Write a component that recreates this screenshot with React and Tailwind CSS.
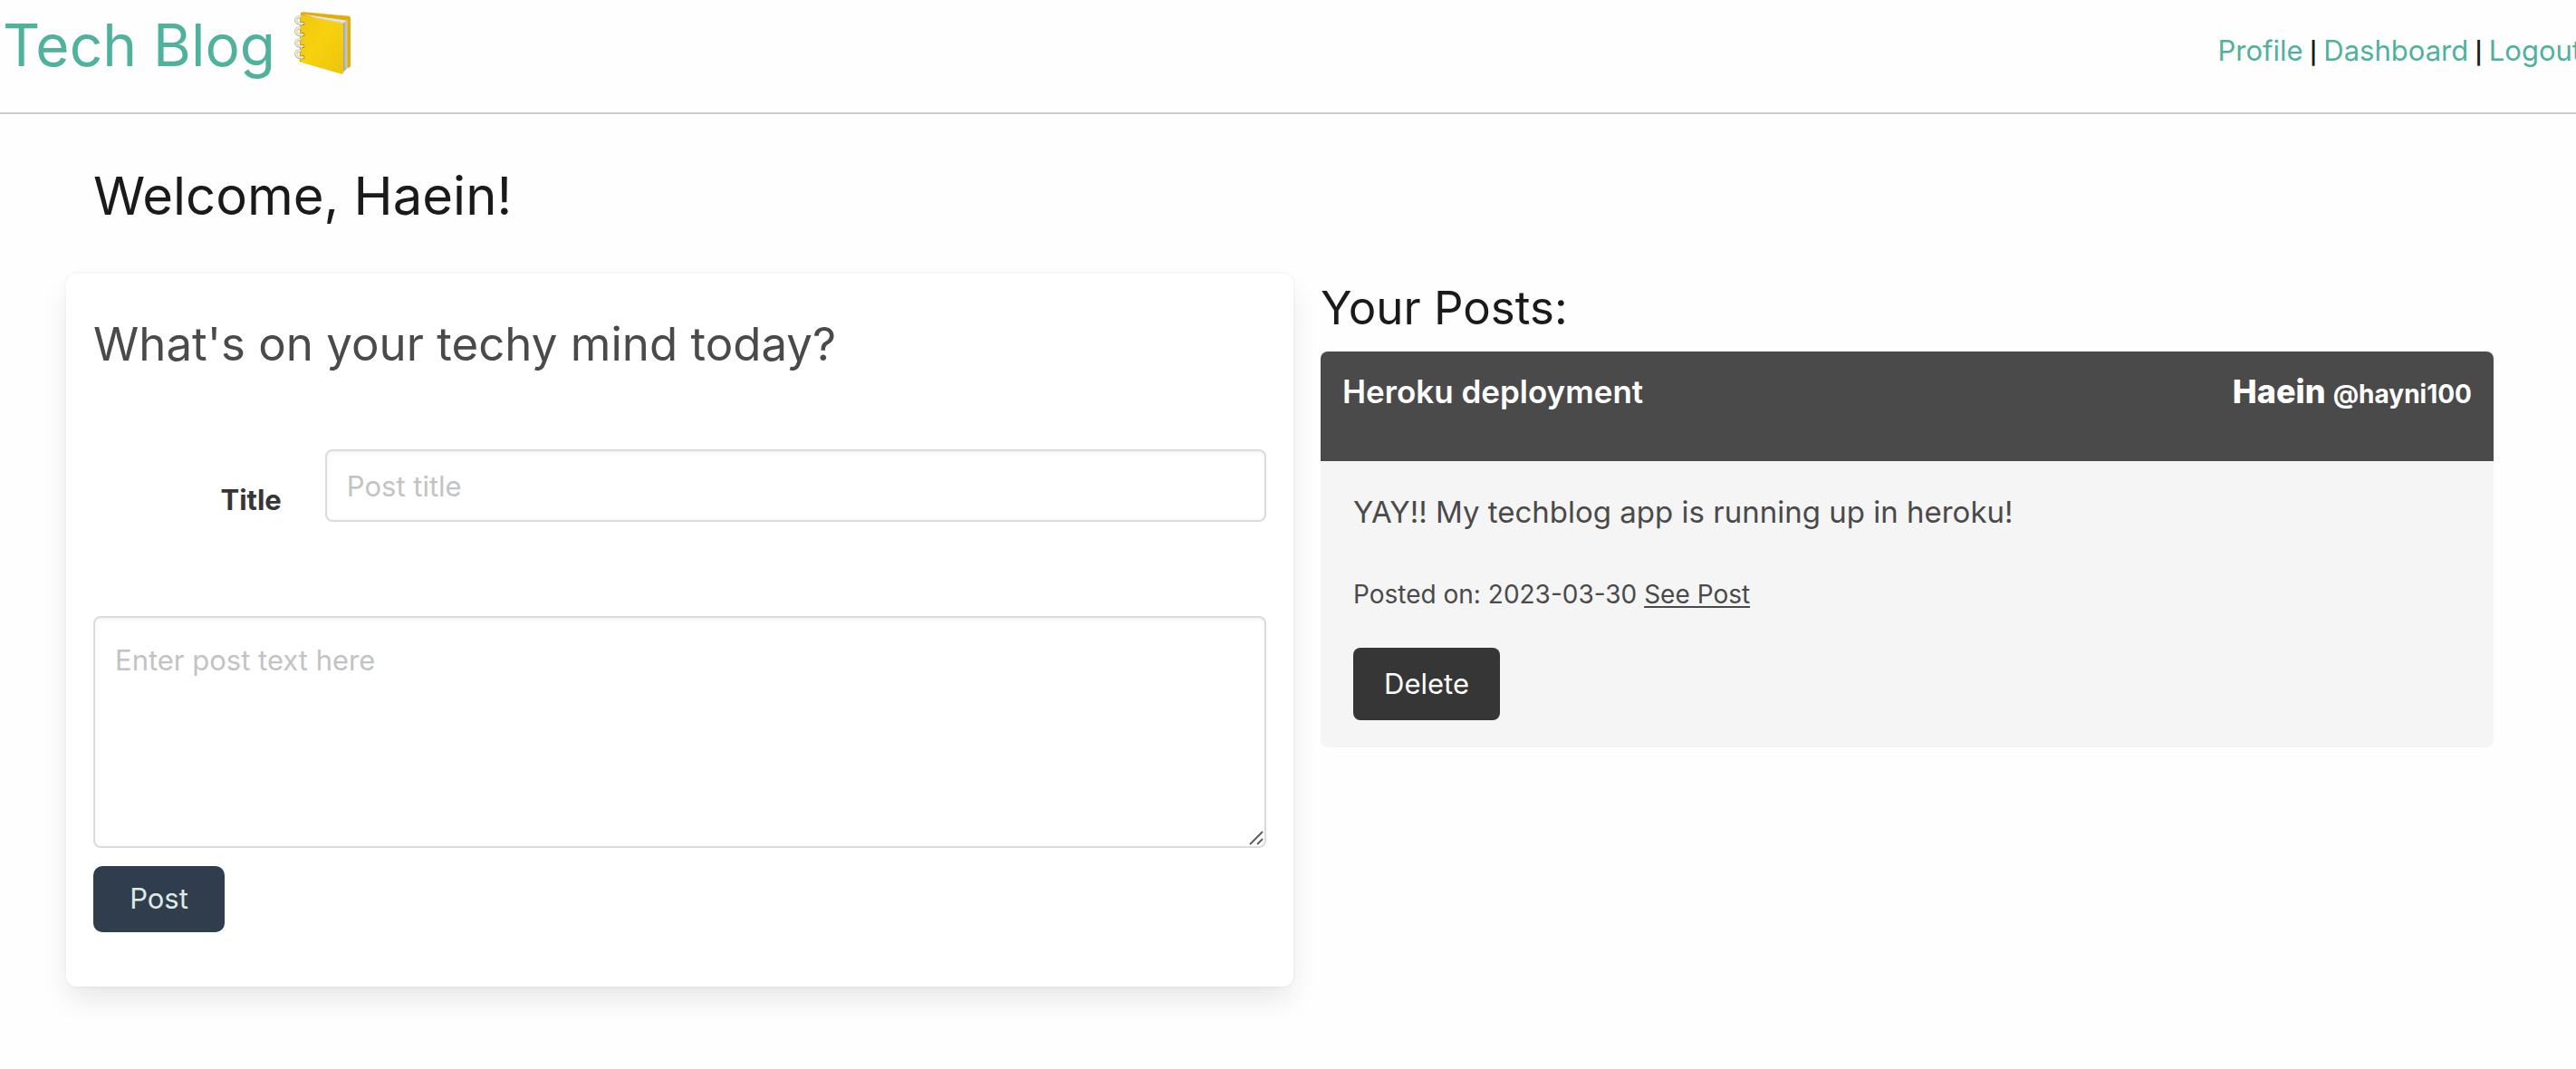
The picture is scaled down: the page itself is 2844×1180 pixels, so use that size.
import React from "react";

function Notebook() {
  const rings = [66, 103, 141, 178];
  return (
    <svg viewBox="42 42 198 216" className="h-[72px] w-[66px] overflow-visible" role="img" aria-label="Notebook">
      <defs>
        <linearGradient id="cover" x1="0" y1="0" x2="1" y2="1">
          <stop offset="0" stopColor="#efc60e" />
          <stop offset="0.45" stopColor="#f7d210" />
          <stop offset="1" stopColor="#efc30a" />
        </linearGradient>
        <linearGradient id="pages" x1="0" y1="0" x2="1" y2="0">
          <stop offset="0" stopColor="#8f9498" />
          <stop offset="1" stopColor="#ced2d5" />
        </linearGradient>
      </defs>
      <path d="M66 42 Q70 39 78 40 L226 53 Q231 54 231 59 V218 Q231 223 225 224 L206 228 L64 60 Z" fill="#e3ae08" />
      <path d="M76 48 L218 68 L206 80 L130 64 Z" fill="#d3d6d9" />
      <path d="M76 48 L218 68 L212 74 L110 56 Z" fill="#e4e6e8" />
      <path d="M203 80 L220 66 V228 L205 240 Z" fill="url(#pages)" />
      <path d="M64 52 Q66 48 72 50 L203 77 Q207 78 207 83 V241 Q207 246 202 245 L66 206 Q62 205 62 201 Z" fill="url(#cover)" />
      <path d="M65 53 V204" stroke="#d3a306" strokeWidth="3" fill="none" />
      {rings.map((y) => (
        <g key={y} fill="none" strokeLinecap="round">
          <circle cx="73" cy={y + 12} r="6" fill="#5f5412" />
          <path d={`M64 ${y - 10} C49 ${y - 11} 47 ${y + 3} 54 ${y + 9} C59 ${y + 14} 67 ${y + 14} 74 ${y + 12}`} stroke="#b5b299" strokeWidth="9" />
          <path d={`M64 ${y - 11} C49 ${y - 12} 47 ${y + 2} 54 ${y + 8} C59 ${y + 13} 67 ${y + 13} 73 ${y + 11}`} stroke="#eae8d4" strokeWidth="6" />
        </g>
      ))}
    </svg>
  );
}

function Header() {
  return (
    <header className="flex items-start justify-between overflow-hidden border-b-2 border-[#cccccc] pb-[38px]">
      <a href="#" className="flex items-center gap-5 pt-3.5 pl-[3px] text-[64px] leading-[72px] text-[#50b19c]">
        <span>Tech Blog</span>
        <Notebook />
      </a>
      <nav className="-mr-1.5 flex items-baseline gap-[7px] pt-9 text-[31px] leading-10 whitespace-nowrap">
        <a href="#" className="text-[#50b19c]">Profile</a>
        <span className="text-2xl font-semibold">|</span>
        <a href="#" className="text-[#50b19c]">Dashboard</a>
        <span className="text-2xl font-semibold">|</span>
        <a href="#" className="text-[#50b19c]">Logout</a>
      </nav>
    </header>
  );
}

function PostForm() {
  return (
    <form className="rounded-xl bg-white px-[30px] pt-[46px] pb-[60px] shadow-[0_16px_32px_-4px_rgba(10,10,10,0.1),0_0_0_2px_rgba(10,10,10,0.02)]">
      <h2 className="text-[51px] leading-[64px] text-[#4a4a4a]">What's on your techy mind today?</h2>
      <div className="mt-[84px] grid grid-cols-[1fr_5fr] gap-12">
        <label htmlFor="title" className="pt-8 text-right text-[31px] leading-[48px] font-bold text-[#363636]">
          Title
        </label>
        <input
          id="title"
          type="text"
          placeholder="Post title"
          className="h-20 w-full rounded-lg border-2 border-[#dbdbdb] bg-white px-[22px] text-[31px] text-[#363636] shadow-[inset_0_2px_4px_rgba(10,10,10,0.05)] outline-none placeholder:text-[#c3c3c3]"
        />
      </div>
      <div className="relative mt-[104px]">
        <textarea
          aria-label="Post text"
          placeholder="Enter post text here"
          className="block h-64 w-full resize-y rounded-lg border-2 border-[#dbdbdb] bg-white px-[22px] pt-6 text-[31px] leading-[46px] text-[#363636] shadow-[inset_0_2px_4px_rgba(10,10,10,0.05)] outline-none placeholder:text-[#c3c3c3] [&::-webkit-resizer]:hidden"
        />
        <svg viewBox="0 0 16 16" className="pointer-events-none absolute right-[3px] bottom-[3px] size-4" aria-hidden="true">
          <path d="M1 15 L15 1 M9 15 L15 9" stroke="#5a5a5e" strokeWidth="1.8" fill="none" />
        </svg>
      </div>
      <button type="button" className="mt-5 h-[73px] w-[145px] rounded-[10px] bg-[#303d4d] text-[31px] text-[#dce9e6]">
        Post
      </button>
    </form>
  );
}

function PostCard() {
  return (
    <article className="overflow-hidden rounded-lg bg-[#f5f5f5] text-[#4a4a4a]">
      <header className="flex items-baseline justify-between bg-[#4a4a4a] px-6 pt-4 pb-[46px] leading-[56px] text-white">
        <h3 className="text-[35px] font-semibold">Heroku deployment</h3>
        <p className="flex items-baseline gap-2 text-[28px] font-bold">
          <strong className="text-[36px] font-extrabold">Haein</strong>
          <span>@hayni100</span>
        </p>
      </header>
      <div className="px-9 pt-7 pb-[30px]">
        <p className="text-[33px] leading-[56px]">YAY!! My techblog app is running up in heroku!</p>
        <p className="mt-[42px] text-[28px] leading-[42px]">
          Posted on: 2023-03-30{" "}
          <a href="#" className="underline decoration-2 underline-offset-3">See Post</a>
        </p>
        <button type="button" className="mt-[38px] h-20 w-[162px] rounded-lg bg-[#363636] text-[31px] text-white">
          Delete
        </button>
      </div>
    </article>
  );
}

export default function App() {
  return (
    <div className="min-h-screen bg-[#fefefe] font-['Inter',sans-serif] text-[#1a1a1a]">
      <Header />
      <main className="pt-[54px] pr-[91px] pb-16 pl-[73px]">
        <h1 className="pl-[30px] text-[58px] leading-[72px]">Welcome, Haein!</h1>
        <div className="mt-[50px] grid grid-cols-[1355fr_1295fr] items-start gap-[30px]">
          <PostForm />
          <section className="pt-1.5">
            <h2 className="mb-4 text-[51px] leading-[64px]">Your Posts:</h2>
            <PostCard />
          </section>
        </div>
      </main>
    </div>
  );
}
